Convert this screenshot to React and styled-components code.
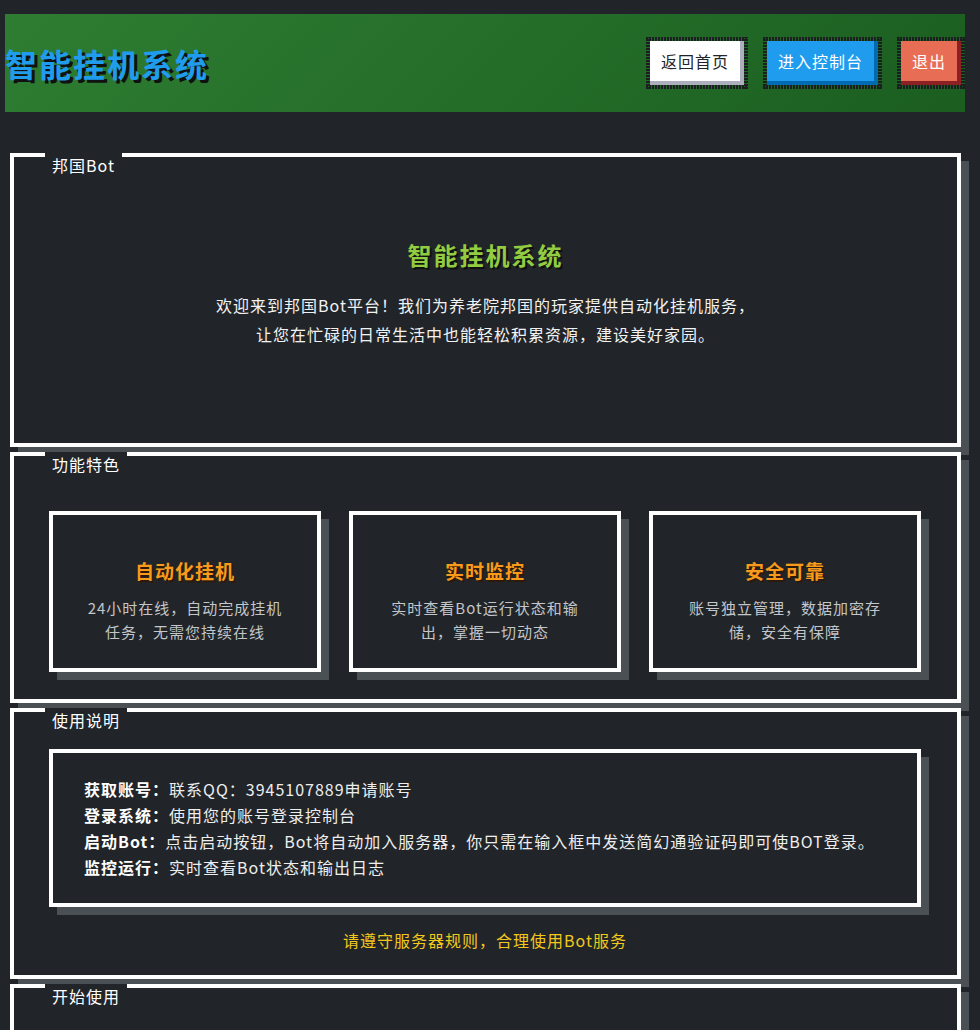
import React from 'react';
import styled, { createGlobalStyle } from 'styled-components';

const GlobalStyle = createGlobalStyle`
  body {
    margin: 0;
    background: #212529;
    color: #fff;
    font-family: "Noto Sans CJK SC", "Noto Sans", sans-serif;
  }
`;

const BUTTONS = {
  light: { bg: '#fff', shade: '#adafbc', color: '#212529' },
  primary: { bg: '#209cee', shade: '#006bb3', color: '#fff' },
  danger: { bg: '#e76e55', shade: '#8c2022', color: '#fff' },
};

const Page = styled.div`
  padding: 14px 15px 40px 5px;
`;

const Header = styled.header`
  height: 98px;
  display: flex;
  align-items: center;
  justify-content: space-between;
  padding-right: 4px;
  background: linear-gradient(135deg, #2e7d32 0%, #1b5e20 100%);
`;

const Brand = styled.h1`
  margin: 0;
  font-size: 32px;
  font-weight: 700;
  letter-spacing: 2px;
  line-height: 40px;
  color: #209cee;
  text-shadow: 3px 3px 0 #111;
`;

const Nav = styled.nav`
  display: flex;
  gap: 23px;
`;

const dash = (dir) =>
  `repeating-linear-gradient(${dir}, #1c1f22 0 2px, transparent 2px 3px)`;

const PixelButton = styled.button`
  position: relative;
  box-sizing: border-box;
  height: 44px;
  padding: 0 15px 4px 11px;
  border: none;
  font-family: inherit;
  font-size: 16px;
  letter-spacing: 1px;
  line-height: 40px;
  cursor: pointer;
  color: ${({ $kind }) => BUTTONS[$kind].color};
  background: ${({ $kind }) => BUTTONS[$kind].bg};
  box-shadow: inset -4px -4px ${({ $kind }) => BUTTONS[$kind].shade};

  /* dotted pixel frame round the button */
  &::before {
    content: '';
    position: absolute;
    inset: -4px;
    pointer-events: none;
    background:
      ${dash('90deg')} top / 100% 4px no-repeat,
      ${dash('90deg')} bottom / 100% 4px no-repeat,
      ${dash('0deg')} left / 4px 100% no-repeat,
      ${dash('0deg')} right / 4px 100% no-repeat;
  }
`;

const Main = styled.main`
  margin-top: 41px;
`;

const Panel = styled.section`
  position: relative;
  margin: 0 4px 5px 5px;
  border: 4px solid #fff;
  background: #212529;
  box-shadow: 8px 8px 0 #4b5055;
  padding: ${({ $pad }) => $pad};
  min-height: ${({ $minH }) => $minH || 0};
`;

const PanelTitle = styled.span`
  position: absolute;
  top: -4px;
  left: 31px;
  padding: 0 7px;
  font-size: 16px;
  letter-spacing: 1px;
  line-height: 24px;
  background: #212529;
`;

const HeroTitle = styled.h2`
  margin: 0 0 18px;
  text-align: center;
  font-size: 24px;
  font-weight: 700;
  letter-spacing: 2px;
  line-height: 36px;
  color: #92cc41;
  text-shadow: 2px 2px 0 #111;
`;

const HeroText = styled.p`
  margin: 0;
  text-align: center;
  font-size: 16px;
  letter-spacing: 1px;
  line-height: 29px;
  color: #f2f2f2;
`;

const FeatureGrid = styled.div`
  display: grid;
  grid-template-columns: repeat(3, 1fr);
  gap: 28px;
`;

const Card = styled.div`
  box-sizing: border-box;
  height: 161px;
  border: 4px solid #fff;
  background: #212529;
  box-shadow: 8px 8px 0 #4b5055;
  padding: ${({ $pad }) => $pad || '42px 30px 0'};
  text-align: ${({ $align }) => $align || 'center'};
`;

const CardTitle = styled.h3`
  margin: 0 0 11px;
  font-size: 19px;
  font-weight: 700;
  letter-spacing: 1px;
  line-height: 28px;
  color: #fa9a1b;
  text-shadow: 2px 2px 0 #2b1a0c;
`;

const CardText = styled.p`
  margin: 0;
  font-size: 15px;
  letter-spacing: 1px;
  line-height: 24px;
  color: #c3c6ca;
`;

const GuideBox = styled(Card)`
  height: 158px;
`;

const GuideLine = styled.div`
  font-size: 16px;
  letter-spacing: 1px;
  line-height: 26px;
  color: #eee;
  white-space: nowrap;

  b {
    font-weight: 700;
    color: #fff;
  }
`;

const Notice = styled.p`
  margin: 20px 0 0;
  text-align: center;
  font-size: 16px;
  letter-spacing: 1px;
  line-height: 26px;
  color: #f2c81b;
`;

const features = [
  { title: '自动化挂机', text: '24小时在线，自动完成挂机任务，无需您持续在线' },
  { title: '实时监控', text: '实时查看Bot运行状态和输出，掌握一切动态' },
  { title: '安全可靠', text: '账号独立管理，数据加密存储，安全有保障' },
];

const guide = [
  ['获取账号：', '联系QQ：3945107889申请账号'],
  ['登录系统：', '使用您的账号登录控制台'],
  ['启动Bot：', '点击启动按钮，Bot将自动加入服务器，你只需在输入框中发送简幻通验证码即可使BOT登录。'],
  ['监控运行：', '实时查看Bot状态和输出日志'],
];

export default function App() {
  return (
    <>
      <GlobalStyle />
      <Page>
        <Header>
          <Brand>智能挂机系统</Brand>
          <Nav>
            <PixelButton $kind="light">返回首页</PixelButton>
            <PixelButton $kind="primary">进入控制台</PixelButton>
            <PixelButton $kind="danger">退出</PixelButton>
          </Nav>
        </Header>

        <Main>
          <Panel $pad="80px 20px 94px">
            <PanelTitle>邦国Bot</PanelTitle>
            <HeroTitle>智能挂机系统</HeroTitle>
            <HeroText>
              欢迎来到邦国Bot平台！我们为养老院邦国的玩家提供自动化挂机服务，
              <br />
              让您在忙碌的日常生活中也能轻松积累资源，建设美好家园。
            </HeroText>
          </Panel>

          <Panel $pad="55px 36px 27px 35px">
            <PanelTitle>功能特色</PanelTitle>
            <FeatureGrid>
              {features.map((f) => (
                <Card key={f.title}>
                  <CardTitle>{f.title}</CardTitle>
                  <CardText>{f.text}</CardText>
                </Card>
              ))}
            </FeatureGrid>
          </Panel>

          <Panel $pad="37px 36px 22px 35px">
            <PanelTitle>使用说明</PanelTitle>
            <GuideBox $pad="23px 31px" $align="left">
              {guide.map(([label, text]) => (
                <GuideLine key={label}>
                  <b>{label}</b>
                  {text}
                </GuideLine>
              ))}
            </GuideBox>
            <Notice>请遵守服务器规则，合理使用Bot服务</Notice>
          </Panel>

          <Panel $pad="0" $minH="120px">
            <PanelTitle>开始使用</PanelTitle>
          </Panel>
        </Main>
      </Page>
    </>
  );
}
